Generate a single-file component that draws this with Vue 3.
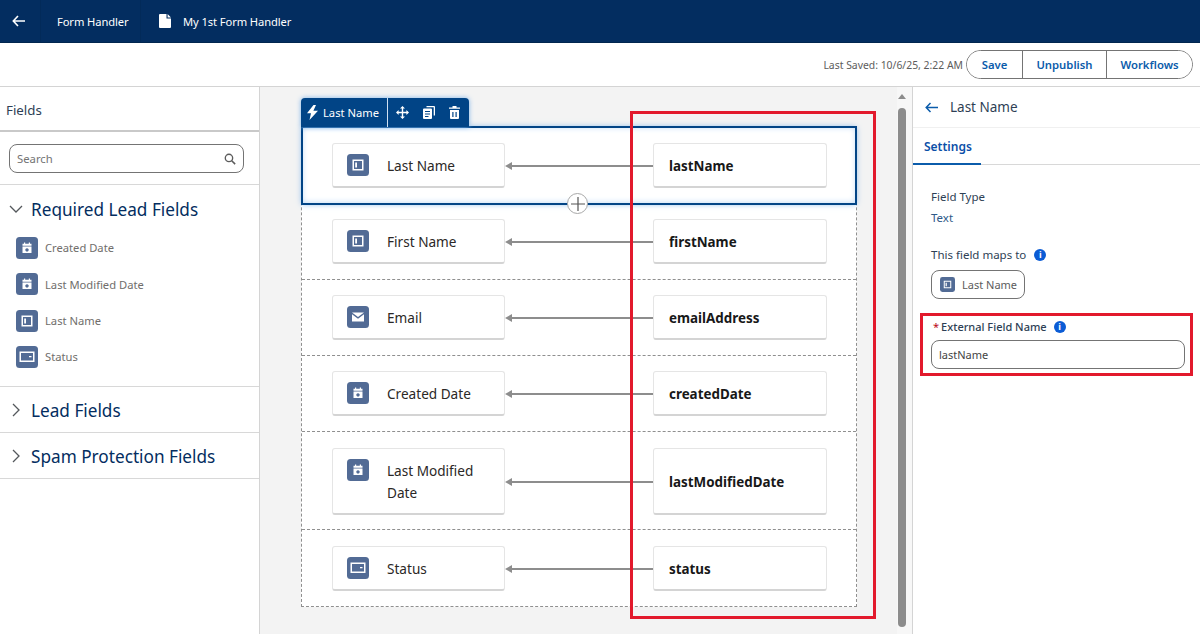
<template>
  <div class="page">
    <header class="topbar">
      <div class="top-cell back-cell">
        <svg width="14" height="12" viewBox="0 0 14 12"><path d="M6 1 1.300 6 6 11M1.500 6H13" fill="none" stroke="#fff" stroke-width="1.600"/></svg>
      </div>
      <div class="top-cell form-cell">Form Handler</div>
      <div class="top-cell file-cell">
        <svg width="12" height="14" viewBox="0 0 12 14"><path d="M1 0h6.500v4.500H12V13a1 1 0 0 1-1 1H1a1 1 0 0 1-1-1V1a1 1 0 0 1 1-1zM8.600 0 12 3.400H8.600z" fill="#fff"/></svg>
        <span>My 1st Form Handler</span>
      </div>
    </header>

    <div class="actionbar">
      <span class="saved">Last Saved: 10/6/25, 2:22 AM</span>
      <div class="btn-group">
        <button class="save">Save</button>
        <button class="unpublish">Unpublish</button>
        <button class="workflows">Workflows</button>
      </div>
    </div>

    <div class="main">
      <aside class="left">
        <div class="fields-title">Fields</div>
        <div class="search-wrap">
          <div class="search">
            <span>Search</span>
            <svg width="12" height="12" viewBox="0 0 14 14"><circle cx="5.800" cy="5.800" r="4.300" fill="none" stroke="#5c5c5c" stroke-width="1.600"/><path d="m9 9 4 4" stroke="#5c5c5c" stroke-width="1.800"/></svg>
          </div>
        </div>
        <section class="group required">
          <div class="group-head">
            <svg width="14" height="14" viewBox="0 0 14 14"><path d="m1 4 6 6 6-6" fill="none" stroke="#54585c" stroke-width="1.300"/></svg>
            <span>Required Lead Fields</span>
          </div>
          <div v-for="item in leadFields" :key="item.label" class="lead-item">
            <svg class="tile" width="22" height="22" viewBox="0 0 22 22"><rect width="22" height="22" rx="3.500" fill="#526b95"/><path :d="glyphs[item.kind]" fill="#fff" fill-rule="evenodd"/></svg>
            <span>{{ item.label }}</span>
          </div>
        </section>
        <section class="group">
          <div class="group-head">
            <svg width="14" height="14" viewBox="0 0 14 14"><path d="m4 1 6 6-6 6" fill="none" stroke="#54585c" stroke-width="1.300"/></svg>
            <span>Lead Fields</span>
          </div>
        </section>
        <section class="group">
          <div class="group-head">
            <svg width="14" height="14" viewBox="0 0 14 14"><path d="m4 1 6 6-6 6" fill="none" stroke="#54585c" stroke-width="1.300"/></svg>
            <span>Spam Protection Fields</span>
          </div>
        </section>
      </aside>

      <div class="canvas">
        <div class="sheet">
          <div v-for="(row, i) in rows" :key="row.name" class="row" :class="{ selected: i === 0 }">
            <div v-if="i === 0" class="row-tools">
              <div class="tool-name">
                <svg width="11" height="15" viewBox="0 0 11 15"><path d="M6.500 0 0 8.300h4L2.500 15 11 5.700H6.400L9 0z" fill="#fff"/></svg>
                <span>Last Name</span>
              </div>
              <div class="tool-icons">
                <svg width="13" height="13" viewBox="0 0 13 13"><path d="M6.500 0 9 2.600H7.200v3.200h3.200V4L13 6.500 10.400 9V7.200H7.200v3.200H9L6.500 13 4 10.400h1.800V7.200H2.600V9L0 6.500 2.600 4v1.800h3.200V2.600H4z" fill="#fff"/></svg>
                <svg width="12" height="13" viewBox="0 0 12 13"><path d="M3.500 0H11a1 1 0 0 1 1 1v8.500h-1.300V1.300H3.500zM1 2.500h7a1 1 0 0 1 1 1V12a1 1 0 0 1-1 1H1a1 1 0 0 1-1-1V3.500a1 1 0 0 1 1-1zM2 5v1h5V5zm0 2.500v1h5v-1zM2 10v1h3.500v-1z" fill="#fff" fill-rule="evenodd"/></svg>
                <svg width="11" height="13" viewBox="0 0 11 13"><path d="M3.500 0h4v1.400H11v1.400H0V1.400h3.500zM1 4h9v8a1 1 0 0 1-1 1H2a1 1 0 0 1-1-1zm2.300 2v5h1.200V6zm3.200 0v5h1.200V6z" fill="#fff" fill-rule="evenodd"/></svg>
              </div>
            </div>
            <div class="card source" :class="{ tall: row.tall }">
              <svg class="tile" width="22" height="22" viewBox="0 0 22 22"><rect width="22" height="22" rx="3.500" fill="#526b95"/><path :d="glyphs[row.kind]" fill="#fff" fill-rule="evenodd"/></svg>
              <span>{{ row.label }}</span>
            </div>
            <div class="link"><i class="head"></i><i class="line"></i></div>
            <div class="card target" :class="{ tall: row.tall }">{{ row.name }}</div>
            <div v-if="i === 0" class="add-btn">
              <svg width="14" height="14" viewBox="0 0 14 14"><path d="M7 0v14M0 7h14" stroke="#555" stroke-width="1.200"/></svg>
            </div>
          </div>
        </div>
        <div class="highlight-map"></div>
      </div>

      <div class="scrollbar">
        <i class="scroll-up"></i>
        <i class="thumb"></i>
      </div>

      <aside class="right">
        <div class="prop-head">
          <svg width="13" height="11" viewBox="0 0 13 11"><path d="M5.500 1 1.200 5.500l4.300 4.500M1.500 5.500H13" fill="none" stroke="#0b5cab" stroke-width="1.500"/></svg>
          <span>Last Name</span>
        </div>
        <div class="tabs"><span class="tab">Settings</span></div>
        <div class="props">
          <div class="prop-label">Field Type</div>
          <div class="prop-value">Text</div>
          <div class="prop-label maps">This field maps to <i class="info">i</i></div>
          <div class="chip">
            <svg width="15" height="15" viewBox="0 0 22 22"><rect width="22" height="22" rx="3.500" fill="#526b95"/><path :d="glyphs.text" fill="#fff" fill-rule="evenodd"/></svg>
            <span>Last Name</span>
          </div>
          <div class="external">
            <div class="prop-label ext-label"><b>*</b> External Field Name <i class="info">i</i></div>
            <div class="ext-input">lastName</div>
          </div>
        </div>
      </aside>
    </div>
  </div>
</template>

<script setup>
const glyphs = {
  text: 'M5.500 5.500h11v11h-11zM7 7v8h8V7zM8.200 8.500h1.800v5H8.200z',
  date: 'M8 5.500h1.200v1.200h3.600V5.500H14v1.200h1.500v2.100h-9V6.700H8zM6.500 9.600h9v6.400h-9zM11 11.200a1.700 1.700 0 1 0 .01 0z',
  mail: 'M5 6.500h12L11 11zM5 8.200l6 4.600 6-4.600v7.300H5z',
  status: 'M3.500 5.500h15v10.500h-15zM5 7v7.500h12V7zM13 10h2.500v1.300H13z'
}

const leadFields = [
  { label: 'Created Date', kind: 'date' },
  { label: 'Last Modified Date', kind: 'date' },
  { label: 'Last Name', kind: 'text' },
  { label: 'Status', kind: 'status' }
]

const rows = [
  { label: 'Last Name', name: 'lastName', kind: 'text' },
  { label: 'First Name', name: 'firstName', kind: 'text' },
  { label: 'Email', name: 'emailAddress', kind: 'mail' },
  { label: 'Created Date', name: 'createdDate', kind: 'date' },
  { label: 'Last Modified Date', name: 'lastModifiedDate', kind: 'date', tall: true },
  { label: 'Status', name: 'status', kind: 'status' }
]
</script>

<style>
html, body { margin: 0; overflow: hidden; }
</style>

<style scoped>
.page {
  width: 1200px;
  height: 634px;
  display: flex;
  flex-direction: column;
  font-family: "Noto Sans", "Open Sans", sans-serif;
  color: #181818;
  background: #fff;
  overflow: hidden;
}

.topbar {
  height: 42px;
  flex: none;
  display: flex;
  background: #032d60;
  color: #fff;
  font-size: 11.200px;
  letter-spacing: -0.1px;
  border-bottom: 1px solid #01264f;
  box-sizing: content-box;
}
.top-cell {
  display: flex;
  align-items: center;
  border-right: 1px solid #022a59;
}
.back-cell { width: 41px; justify-content: center; box-sizing: border-box; padding-right: 2px; }
.form-cell { width: 100px; box-sizing: border-box; padding-left: 16px; }
.file-cell { padding-left: 18px; gap: 12px; border-right: 0; }

.actionbar {
  height: 44px;
  flex: none;
  box-sizing: border-box;
  display: flex;
  align-items: center;
  justify-content: flex-end;
  padding: 0 7px 0 0;
  border-bottom: 1px solid #d4d4d4;
}
.saved { font-size: 10.400px; color: #5c5c5c; margin-right: 3px; }
.btn-group {
  display: flex;
  height: 29px;
  box-sizing: border-box;
  border: 1px solid #747474;
  border-radius: 15px;
  overflow: hidden;
}
.btn-group button {
  border: 0;
  border-left: 1px solid #747474;
  background: #fff;
  color: #0b5cab;
  font: 600 11.300px "Noto Sans", sans-serif;
  padding: 0;
}
.btn-group .save { width: 55px; border-left: 0; }
.btn-group .unpublish { width: 84px; }
.btn-group .workflows { width: 86px; }

.main { flex: 1; display: flex; min-height: 0; }

.left {
  width: 260px;
  flex: none;
  box-sizing: border-box;
  border-right: 1px solid #d4d4d4;
  color: #032d60;
}
.fields-title {
  height: 45px;
  box-sizing: border-box;
  padding: 13px 0 0 6px;
  font-size: 13.300px;
  line-height: 20px;
  color: #2e3f55;
  border-bottom: 2px solid #c9c9c9;
}
.search-wrap { padding: 12px 15px 11px 9px; border-bottom: 1px solid #d8d8d8; }
.search {
  height: 29px;
  box-sizing: border-box;
  display: flex;
  align-items: center;
  justify-content: space-between;
  padding: 0 7px;
  border: 1px solid #747474;
  border-radius: 8px;
  font-size: 11.300px;
  color: #747474;
}
.group { border-bottom: 1px solid #d8d8d8; }
.group-head {
  height: 45px;
  box-sizing: border-box;
  padding-top: 2px;
  display: flex;
  align-items: center;
  gap: 8px;
  padding-left: 9px;
  font-size: 17.200px;
}
.required { padding-bottom: 10.400px; }
.required .group-head { height: 48px; padding-top: 0; margin-bottom: -3.400px; }
.lead-item {
  height: 36.400px;
  display: flex;
  align-items: center;
  gap: 7px;
  padding-left: 16px;
  font-size: 11.200px;
  color: #706e6b;
}
.tile { flex: none; }

.canvas {
  position: relative;
  flex: none;
  width: 637px;
  box-sizing: border-box;
  background: #f3f3f3;
  padding: 40px 0 0 41px;
}
.sheet {
  width: 556px;
  box-sizing: border-box;
  background: #fff;
  border: 1px dashed #8f8f8f;
  border-top: 0;
}
.row {
  position: relative;
  display: flex;
  align-items: center;
  padding: 15px 29px 15px 30px;
  border-bottom: 1px dashed #8f8f8f;
}
.row:nth-child(5) { padding-top: 16px; padding-bottom: 14px; }
.row:last-child { padding-top: 16px; border-bottom: 0; }
.row.selected {
  padding-top: 16px;
  outline: 2px solid #014486;
  outline-offset: -1px;
  box-shadow: 0 0 6px #7db3ea, inset 0 0 6px #b5d4f4;
  z-index: 1;
  background: #fff;
}
.row-tools {
  position: absolute;
  left: -1px;
  top: -29px;
  height: 29px;
  display: flex;
  align-items: center;
  background: #014486;
  border-radius: 4px 4px 0 0;
  color: #fff;
  font-size: 11.200px;
  box-shadow: 0 0 5px #7db3ea;
}
.tool-name {
  height: 100%;
  display: flex;
  align-items: center;
  gap: 5px;
  padding: 0 8px 0 6px;
  border-right: 1px solid #cfe0f2;
}
.tool-icons { display: flex; align-items: center; gap: 14px; padding: 0 9px 0 8px; }

.card {
  height: 45px;
  box-sizing: border-box;
  flex: none;
  width: 173px;
  background: #fff;
  border: 1px solid #e5e5e5;
  border-bottom: 2px solid #d4d4d4;
  border-radius: 3px;
  font-size: 13.600px;
}
.card.tall { height: 67px; }
.source {
  display: flex;
  align-items: center;
  gap: 18px;
  padding: 0 10px 0 14px;
  line-height: 22px;
  color: #2b2826;
}
.source span { padding-top: 2px; }
.source.tall { align-items: flex-start; padding-top: 10px; }
.source.tall span { padding-top: 1px; }
.target {
  width: 174px;
  display: flex;
  align-items: center;
  padding: 2px 0 0 15px;
  font-weight: 700;
  font-size: 13.400px;
}

.link { flex: 1; display: flex; align-items: center; }
.link .head {
  width: 0;
  height: 0;
  border: 4px solid transparent;
  border-left: 0;
  border-right: 7px solid #8d8d8d;
}
.link .line { flex: 1; height: 2px; background: #8d8d8d; }

.add-btn {
  position: absolute;
  left: 265px;
  bottom: -11px;
  width: 21px;
  height: 21px;
  box-sizing: border-box;
  border: 1px solid #a8a8a8;
  border-radius: 50%;
  background: #fff;
  display: flex;
  align-items: center;
  justify-content: center;
}

.highlight-map {
  position: absolute;
  left: 370px;
  top: 24px;
  width: 246px;
  height: 508px;
  box-sizing: border-box;
  border: 3px solid #e2192c;
  z-index: 2;
  pointer-events: none;
}

.scrollbar {
  width: 16px;
  flex: none;
  box-sizing: border-box;
  border-right: 1px solid #d4d4d4;
  background: #f7f7f7;
  display: flex;
  flex-direction: column;
  align-items: center;
  padding: 7px 5px 7px 0;
}
.scroll-up {
  width: 0;
  height: 0;
  border: 4px solid transparent;
  border-top: 0;
  border-bottom: 5px solid #8c8c8c;
}
.thumb {
  width: 8px;
  flex: 1;
  margin-top: 9px;
  border-radius: 4px;
  background: #8c8c8c;
}

.right { flex: 1; min-width: 0; }
.prop-head {
  height: 41px;
  box-sizing: border-box;
  display: flex;
  align-items: center;
  gap: 12px;
  padding-left: 12px;
  font-size: 13.500px;
  color: #2e3f55;
  border-bottom: 1px solid #f0f0f0;
}
.tabs { height: 37px; box-sizing: border-box; border-bottom: 1px solid #d8d8d8; }
.tab {
  display: block;
  width: 68px;
  height: 37px;
  box-sizing: border-box;
  padding: 10px 0 0 11px;
  border-bottom: 2px solid #0b5cab;
  font-size: 12px;
  font-weight: 600;
  color: #0b4fa8;
}
.props { padding: 23px 7px 0 18px; font-size: 11.500px; color: #2e3f55; }
.prop-label { line-height: 18px; display: flex; align-items: center; gap: 4px; }
.prop-value { margin-top: 3px; line-height: 18px; color: #2e5a88; }
.maps { margin-top: 19px; }
.info {
  display: inline-block;
  width: 12px;
  height: 12px;
  border-radius: 50%;
  background: #0b5cd5;
  color: #fff;
  font: 700 9px/12px "Noto Sans", sans-serif;
  text-align: center;
  margin-left: 4px;
}
.chip {
  margin-top: 6px;
  width: 94px;
  height: 29px;
  box-sizing: border-box;
  display: flex;
  align-items: center;
  gap: 7px;
  padding-left: 8px;
  border: 1px solid #747474;
  border-radius: 8px;
  color: #5c5c5c;
  font-size: 11px;
}
.external { position: relative; margin-top: 19px; }
.external::after {
  content: "";
  position: absolute;
  left: -11px;
  top: -5px;
  width: 273px;
  height: 63px;
  box-sizing: border-box;
  border: 3px solid #e2192c;
}
.ext-label { gap: 2px; font-weight: 500; font-size: 11px; }
.ext-label .info { margin-left: 5px; }
.external b { color: #ba0517; font-weight: 400; margin-left: 2px; }
.ext-input {
  margin-top: 4px;
  height: 29px;
  box-sizing: border-box;
  width: 254px;
  display: flex;
  align-items: center;
  padding-left: 7px;
  border: 1px solid #747474;
  border-radius: 8px;
  color: #444;
  font-size: 11px;
}
</style>
